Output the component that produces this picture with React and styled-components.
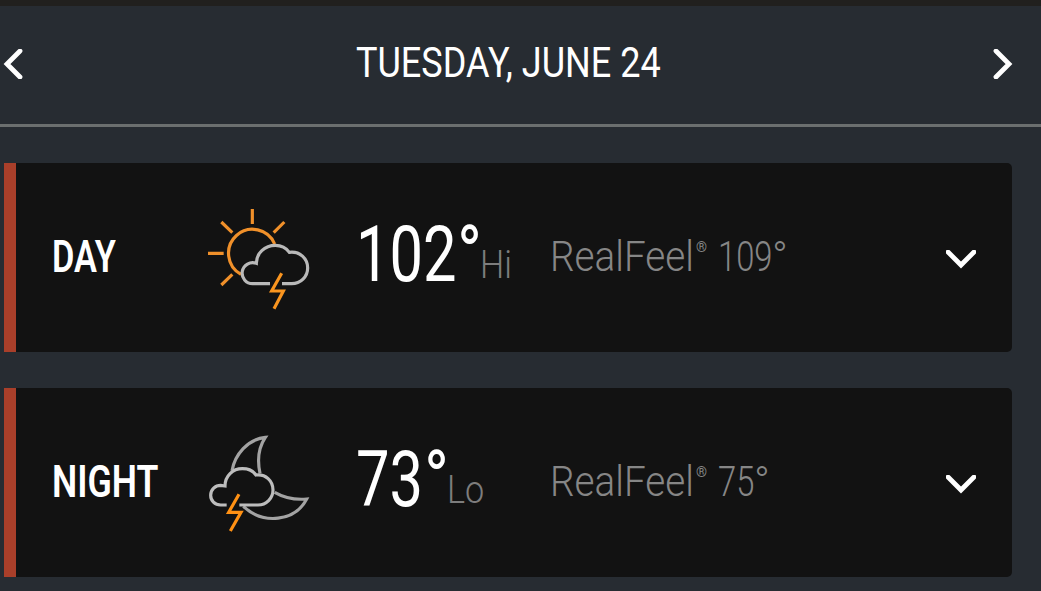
import React from 'react';
import styled, { createGlobalStyle } from 'styled-components';

const forecasts = [
  {
    label: 'DAY',
    labelScale: 0.78,
    icon: 'day',
    temp: '102',
    tempWidth: 101,
    tempScale: 0.765,
    unit: 'Hi',
    realFeel: '109',
    realFeelWidth: 54,
  },
  {
    label: 'NIGHT',
    labelScale: 0.81,
    icon: 'night',
    temp: '73',
    tempWidth: 68,
    tempScale: 0.765,
    unit: 'Lo',
    realFeel: '75',
    realFeelWidth: 36,
  },
];

function DayIcon() {
  return (
    <WeatherSvg viewBox="0 0 360 360">
      <g stroke="#f0902a">
        <path d="M224 132A72 72 0 1 0 123 223" />
        <path d="M157 27V72M64 66L97 98M253 66L221 98M24 160H71M64 255L97 223" />
      </g>
      <path
        stroke="#b9b9b9"
        d="M210 251H158A31.500 31.500 0 1 1 169 190C169 160 194 136 226 136C243 136 258 143 268 157C300 153 323 176 323 204C323 230 302 251 275 251H246"
      />
      <path stroke="#fa951f" d="M245 220L215 273H250L222 326" />
    </WeatherSvg>
  );
}

function NightIcon() {
  return (
    <WeatherSvg viewBox="0 0 360 360">
      <g stroke="#a3a3a3">
        <path d="M96 137C105 88 143 43 196 37C174 70 172 108 180 145" />
        <path d="M224 202C250 217 285 225 320 222C285 290 190 300 130 244" />
      </g>
      <path
        stroke="#bdbdbd"
        d="M80 240H62C44 240 32 227 32 211C32 194 46 181 62 181L75 183C75 153 98 131 127 131C145 131 160 138 168 150C197 146 219 168 219 195C219 220 199 240 174 240H118"
      />
      <path stroke="#ff9114" d="M117 208L86 262H123L91 318" />
    </WeatherSvg>
  );
}

function ForecastCard({ forecast }) {
  return (
    <Card>
      <Label>
        <Narrow $scale={forecast.labelScale}>{forecast.label}</Narrow>
      </Label>
      {forecast.icon === 'day' ? <DayIcon /> : <NightIcon />}
      <Temperature>
        <TempValue $width={forecast.tempWidth}>
          <Narrow $scale={forecast.tempScale}>{forecast.temp}</Narrow>
        </TempValue>
        <TempDegree>
          <Narrow $scale={0.86}>°</Narrow>
        </TempDegree>
        <TempUnit>
          <Narrow $scale={0.9}>{forecast.unit}</Narrow>
        </TempUnit>
      </Temperature>
      <RealFeel>
        <RealFeelName>
          <Narrow $scale={0.92}>RealFeel</Narrow>
        </RealFeelName>
        <Registered>®</Registered>
        <RealFeelValue $width={forecast.realFeelWidth}>
          <Narrow $scale={0.78}>{forecast.realFeel}</Narrow>
        </RealFeelValue>
        <RealFeelDegree>°</RealFeelDegree>
      </RealFeel>
      <ExpandButton aria-label="Expand">
        <svg width="30" height="19" viewBox="0 0 30 19">
          <path d="M2 2L15 15L28 2" />
        </svg>
      </ExpandButton>
    </Card>
  );
}

function App() {
  return (
    <Page>
      <GlobalStyle />
      <Header>
        <ArrowButton aria-label="Previous day">
          <svg width="20" height="30" viewBox="0 0 20 30">
            <path d="M17 2L4 15L17 28" />
          </svg>
        </ArrowButton>
        <Title>
          <Narrow $scale={0.858}>TUESDAY, JUNE 24</Narrow>
        </Title>
        <ArrowButton aria-label="Next day">
          <svg width="20" height="30" viewBox="0 0 20 30">
            <path d="M3 2L16 15L3 28" />
          </svg>
        </ArrowButton>
      </Header>
      <Cards>
        {forecasts.map(forecast => (
          <ForecastCard key={forecast.label} forecast={forecast} />
        ))}
      </Cards>
    </Page>
  );
}

export default App;

const GlobalStyle = createGlobalStyle`
  * {
    box-sizing: border-box;
  }

  body {
    margin: 0;
    background-color: #272c32;
  }
`;

const Page = styled.div`
  height: 591px;
  overflow: hidden;
  border-top: 6px solid #21201e;
  background-color: #272c32;
  color: #fff;
  font-family: Roboto, 'Liberation Sans', sans-serif;
`;

const Header = styled.header`
  display: flex;
  align-items: center;
  justify-content: space-between;
  height: 121px;
  padding: 0 28px 2px 3px;
  border-bottom: 3px solid #6b6f6f;
`;

const ArrowButton = styled.button`
  display: flex;
  padding: 0;
  border: 0;
  background: none;

  path {
    fill: none;
    stroke: #fff;
    stroke-width: 4.8;
    stroke-linecap: round;
  }
`;

const Title = styled.h1`
  width: 304px;
  margin: 0 0 3px;
  font-size: 42px;
  font-weight: 400;
  line-height: 50px;
`;

const Narrow = styled.span`
  display: inline-block;
  white-space: nowrap;
  transform: scaleX(${props => props.$scale});
  transform-origin: left;
`;

const Cards = styled.main`
  display: flex;
  flex-direction: column;
  gap: 36px;
  padding: 36px 29px 0 4px;
`;

const Card = styled.section`
  display: flex;
  align-items: center;
  height: 189px;
  padding: 0 36px 0 36px;
  border-left: 12px solid #a93f2a;
  border-radius: 0 5px 5px 0;
  background-color: #121212;
`;

const Label = styled.div`
  width: 148px;
  margin-bottom: 2px;
  font-size: 44px;
  font-weight: 600;
  line-height: 50px;
`;

const WeatherSvg = styled.svg`
  flex-shrink: 0;
  width: 120px;
  height: 120px;
  margin-top: 5px;
  fill: none;
  stroke-width: 9.5;
`;

const Temperature = styled.div`
  display: flex;
  align-items: flex-end;
  width: 194px;
  margin: 0 0 5px 36px;
`;

const TempValue = styled.span`
  width: ${props => props.$width}px;
  font-size: 78px;
  line-height: 90px;
`;

const TempDegree = styled.span`
  width: 23px;
  font-size: 78px;
  line-height: 90px;
`;

const TempUnit = styled.span`
  margin-bottom: 13px;
  color: #7d7d7d;
  font-size: 38px;
  font-weight: 300;
  line-height: 44px;
`;

const RealFeel = styled.div`
  display: flex;
  align-items: baseline;
  margin-bottom: 2px;
  color: #868686;
  font-size: 42px;
  font-weight: 300;
  line-height: 50px;
`;

const RealFeelName = styled.span`
  width: 146px;
`;

const Registered = styled.span`
  align-self: flex-start;
  width: 22px;
  font-size: 14px;
  font-weight: 400;
  line-height: 30px;
`;

const RealFeelValue = styled.span`
  width: ${props => props.$width}px;
`;

const RealFeelDegree = styled.span`
  width: 14px;
`;

const ExpandButton = styled(ArrowButton)`
  margin: 4px 0 0 auto;
`;
